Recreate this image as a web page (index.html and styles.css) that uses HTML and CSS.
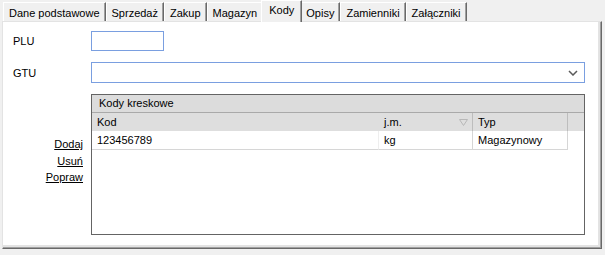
FILE: index.html
```html
<!DOCTYPE html>
<html>
<head>
    <title>Towar - Kody</title>
    <link rel="stylesheet" href="styles.css">
</head>
<body>
<div class="tabs">
    <span class="tab">Dane podstawowe</span>
    <span class="tab">Sprzedaż</span>
    <span class="tab">Zakup</span>
    <span class="tab">Magazyn</span>
    <span class="tab active">Kody</span>
    <span class="tab">Opisy</span>
    <span class="tab">Zamienniki</span>
    <span class="tab">Załączniki</span>
</div>
<div class="panel">
    <div class="form">
        <label class="lbl" for="plu">PLU</label>
        <div><input type="text" id="plu" class="plu"></div>

        <label class="lbl">GTU</label>
        <div class="combo">
            <svg width="10" height="6" viewBox="0 0 10 6"><polyline points="1,1 5,5 9,1" fill="none" stroke="#5a5a5a" stroke-width="1.5"/></svg>
        </div>

        <div class="links">
            <a href="#">Dodaj</a>
            <a href="#">Usuń</a>
            <a href="#">Popraw</a>
        </div>
        <div class="grid">
            <div class="group">Kody kreskowe</div>
            <div class="row head">
                <div class="cell">Kod</div>
                <div class="cell sort">j.m.
                    <svg width="9" height="7" viewBox="0 0 9 7"><polygon points="0.5,0.5 8.5,0.5 4.5,6.5" fill="none" stroke="#b8b8b8"/></svg>
                </div>
                <div class="cell">Typ</div>
            </div>
            <div class="row data">
                <div class="cell">123456789</div>
                <div class="cell">kg</div>
                <div class="cell">Magazynowy</div>
            </div>
        </div>
    </div>
</div>
</body>
</html>
```

FILE: styles.css
```css
body {
	margin: 0;
	background-color: #f0f0f0;
	font-family: "Liberation Sans", Arial, sans-serif;
	font-size: 11px;
	color: #000000;
}

/* tab strip */
.tabs {
	display: flex;
	align-items: flex-end;
	height: 21px;
	padding-left: 3px;
}

.tab {
	height: 18px;
	line-height: 20px;
	padding: 0 5px;
	border-top: 1px solid #ffffff;
	border-left: 1px solid #ffffff;
	border-right: 1px solid #696969;
	box-shadow: inset -1px 0 0 #a0a0a0;
	white-space: nowrap;
}

.tab.active {
	position: relative;
	height: 21px;
	line-height: 19px;
	margin: 0 -2px -1px;
	padding: 0 7px;
	background-color: #f0f0f0;
	z-index: 1;
}

/* page body */
.panel {
	height: 228px;
	margin: 0 3px 0 2px;
	padding: 9px 16px 0 9px;
	background-color: #ffffff;
	border-top: 1px solid #e3e3e3;
	border-left: 1px solid #e3e3e3;
	border-right: 1px solid #696969;
	border-bottom: 1px solid #696969;
	box-shadow: inset -1px -1px 0 #a0a0a0, inset -3px -3px 0 #e3e3e3;
	box-sizing: border-box;
}

.form {
	display: grid;
	grid-template-columns: 79px 1fr;
	grid-template-rows: 20px 21px auto;
	row-gap: 11px;
	align-items: center;
}

.lbl {
	padding-left: 1px;
}

.plu {
	display: block;
	width: 73px;
	height: 20px;
	margin: 0;
	padding: 0;
	border: 1px solid #7a9fe0;
	box-sizing: border-box;
	outline: none;
}

.combo {
	display: flex;
	justify-content: flex-end;
	align-items: center;
	height: 21px;
	padding-right: 6px;
	border: 1px solid #7a9fe0;
	box-sizing: border-box;
}

.links {
	align-self: start;
	display: flex;
	flex-direction: column;
	align-items: flex-end;
	padding: 42px 8px 0 0;
}

.links a {
	color: #000000;
	line-height: 16.5px;
}

/* barcode grid */
.grid {
	align-self: start;
	height: 141px;
	border: 1px solid #646464;
	box-sizing: border-box;
}

.group {
	height: 17px;
	line-height: 17px;
	padding-left: 7px;
	background-color: #dcdcdc;
	border-bottom: 1px solid #a9a9a9;
}

.row {
	display: grid;
	grid-template-columns: 287px 94px 95px;
	height: 18px;
	line-height: 18px;
}

.row.head {
	background-color: #dedede;
}

.row .cell {
	padding-left: 5px;
	white-space: nowrap;
}

.row.head .cell {
	border-right: 1px solid #bdbdbd;
}

.row.head .cell:first-child {
	border-right-color: #dedede;
}

.cell.sort {
	display: flex;
	align-items: center;
	justify-content: space-between;
	padding-right: 4px;
}

.row.data .cell {
	border-right: 1px solid #d6d6d6;
	border-bottom: 1px solid #d6d6d6;
	height: 18px;
	line-height: 18px;
}

.row.data .cell:first-child {
	border-right-color: #eeeeee;
}
```
